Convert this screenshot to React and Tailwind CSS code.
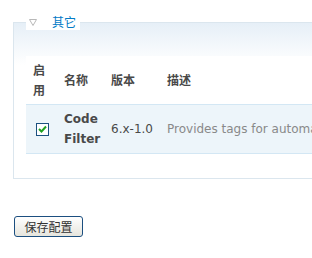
import React from "react";

const Checked = () => (
  <span className="ml-[3px] flex h-[13px] w-[13px] items-center justify-center border border-[#1c5180] bg-white">
    <svg width="9" height="8" viewBox="0 0 9 8">
      <path d="M1 4 L3.5 6.5 L8 1.5" fill="none" stroke="#21a121" strokeWidth="2" />
    </svg>
  </span>
);

export default function App() {
  return (
    <div className="h-[258px] w-[312px] overflow-hidden bg-white pt-px font-['DejaVu_Sans','Noto_Sans_CJK_SC',sans-serif] text-[12px] text-[#494949]">
      {/* Collapsible fieldset */}
      <fieldset className="ml-[13px] mt-[13px] w-[340px] border border-[#dbe6ee] bg-[linear-gradient(#e6eff7,#ffffff_42px)] pb-[24px] pl-[12px]">
        <legend className="flex items-center bg-white pl-[3px] pr-[4px] leading-[16px]">
          <svg width="8" height="7" viewBox="0 0 8 7" className="mt-[1px]">
            <path d="M0.5 0.5 H7.5 L4 6.5 Z" fill="white" stroke="#b8b8b8" />
          </svg>
          <span className="ml-[15px] font-['Noto_Sans_CJK_SC',sans-serif] text-[#027ac6]">其它</span>
        </legend>

        <table className="mt-[26px] w-[326px] table-fixed border-collapse bg-white leading-[20px]">
          <thead>
            <tr>
              <th className="w-[31px] py-[4px] pl-[7px] text-left align-middle font-bold font-['Noto_Sans_CJK_SC',sans-serif]">
                启<br />用
              </th>
              <th className="w-[47px] py-[4px] pl-[7px] text-left font-bold font-['Noto_Sans_CJK_SC',sans-serif]">名称</th>
              <th className="w-[56px] py-[4px] pl-[7px] text-left font-bold font-['Noto_Sans_CJK_SC',sans-serif]">版本</th>
              <th className="py-[4px] pl-[7px] text-left font-bold font-['Noto_Sans_CJK_SC',sans-serif]">描述</th>
            </tr>
          </thead>
          <tbody className="border-t border-[#d3e7f4]">
            <tr className="border-b border-[#d3e7f4] bg-[#edf5fa]">
              <td className="py-[4px] pl-[7px] align-middle">
                <Checked />
              </td>
              <td className="py-[4px] pl-[7px] font-bold">
                Code<br />Filter
              </td>
              <td className="py-[4px] pl-[7px]">6.x-1.0</td>
              <td className="whitespace-nowrap py-[4px] pl-[7px] text-[#898989]">
                Provides tags for automatic syntax highlighting.
              </td>
            </tr>
          </tbody>
        </table>
      </fieldset>

      <button className="ml-[14px] mt-[37px] flex h-[21px] w-[69px] items-center justify-center rounded-[3px] border border-[#1c4f80] bg-[linear-gradient(#ffffff,#e6e5dd)] font-['Noto_Sans_CJK_SC',sans-serif] text-[12px] text-[#333]">
        保存配置
      </button>
    </div>
  );
}
